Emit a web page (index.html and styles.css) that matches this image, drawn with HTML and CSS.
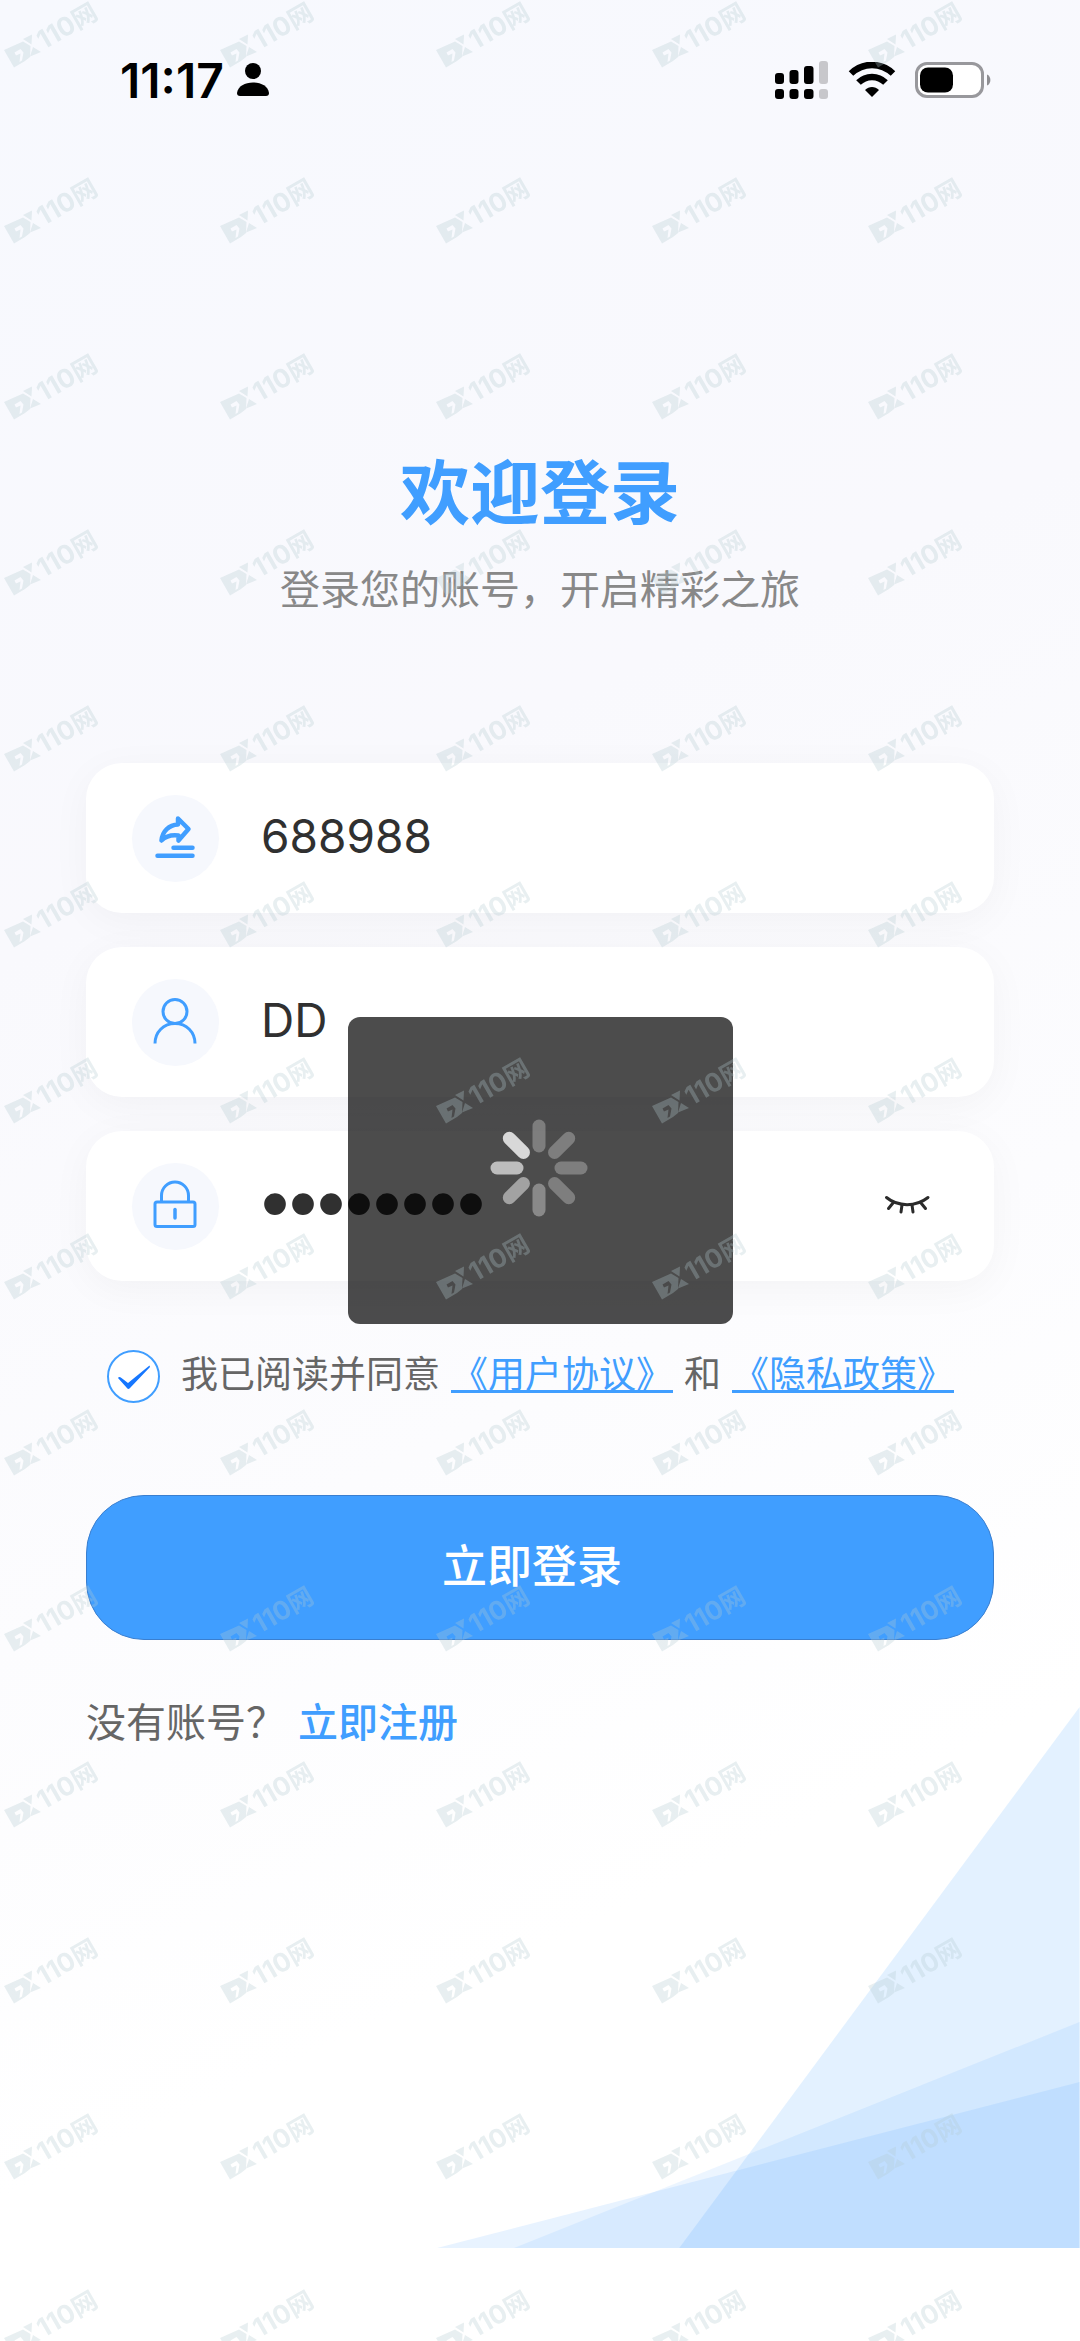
FILE: index.html
```html
<!DOCTYPE html>
<html lang="zh-CN">
<head>
    <meta charset="UTF-8">
    <meta name="viewport" content="width=device-width, initial-scale=1.0">
    <title>欢迎登录</title>
    <link rel="stylesheet" href="styles.css">
</head>
<body>
    <div class="page">
        <svg class="page-bg" viewBox="0 0 642 541" preserveAspectRatio="none" aria-hidden="true">
            <polygon points="242,541 642,0 642,541" fill="#409eff" fill-opacity="0.15"/>
            <polygon points="77,541 642,315 642,541" fill="#409eff" fill-opacity="0.1"/>
            <polygon points="0,541 642,375 642,541" fill="#409eff" fill-opacity="0.12"/>
        </svg>

        <header class="status-bar">
            <div class="status-left">
                <span class="time">11:17</span>
                <svg width="32" height="34" viewBox="0 0 32 34" aria-hidden="true">
                    <circle cx="16" cy="8" r="8"/>
                    <path d="M3 33 Q0 33 0 30 C1 23 8 19.500 16 19.500 C24 19.500 31 23 32 30 Q32 33 29 33Z"/>
                </svg>
            </div>
            <div class="status-right">
                <svg width="54" height="38" viewBox="0 0 54 38" aria-hidden="true">
                    <rect x="0" y="12" width="9" height="11" rx="3"/>
                    <rect x="14.500" y="9" width="9" height="14" rx="3"/>
                    <rect x="29" y="5" width="9.500" height="18" rx="3"/>
                    <rect x="44" y="0" width="9" height="23" rx="3" fill="#c7c7cb"/>
                    <rect x="0" y="28" width="9" height="10" rx="3"/>
                    <rect x="14.500" y="28" width="9" height="10" rx="3"/>
                    <rect x="29" y="28" width="9.500" height="10" rx="3"/>
                    <rect x="44" y="28" width="9" height="10" rx="3" fill="#c7c7cb"/>
                </svg>
                <svg width="48" height="36" viewBox="0 0 48 36" aria-hidden="true">
                    <path d="M3 11.500 C15 0 33 0 45 11.500" fill="none" stroke="#000" stroke-width="6.500"/>
                    <path d="M10.500 20.500 C18 13 30 13 37.500 20.500" fill="none" stroke="#000" stroke-width="6.500"/>
                    <path d="M17 28 C21 24 27 24 31 28 L24 35Z"/>
                </svg>
                <svg width="76" height="36" viewBox="0 0 76 36" aria-hidden="true">
                    <rect x="1.500" y="1.500" width="66" height="33" rx="10.500" fill="#fff" stroke="#98989c" stroke-width="3"/>
                    <rect x="5" y="5.500" width="33" height="25" rx="8"/>
                    <path d="M72 12.500 C76.500 14 76.500 22 72 23.500Z" fill="#8e8e92"/>
                </svg>
            </div>
        </header>

        <main class="login">
            <h1 class="title">欢迎登录</h1>
            <p class="subtitle">登录您的账号，开启精彩之旅</p>

            <form class="login-form" onsubmit="return false">
                <div class="field">
                    <label class="field-icon" for="invite" aria-label="邀请码">
                        <svg width="48" height="48" viewBox="0 0 48 48" fill="none" stroke="#409eff" stroke-width="4.500" stroke-linecap="round" stroke-linejoin="round">
                            <path d="M26 4.500 L36.500 15 L26.500 26.500 V21.500 C19 20.500 14 22 9.500 26.500 C10.500 17 17 11 26 10.500Z"/>
                            <path d="M21.500 33.700 H40.500 M5.500 41.700 H40.500"/>
                        </svg>
                    </label>
                    <input type="text" id="invite" value="688988">
                </div>

                <div class="field">
                    <label class="field-icon" for="username" aria-label="账号">
                        <svg width="48" height="48" viewBox="0 0 48 48" fill="none" stroke="#409eff" stroke-width="3">
                            <circle cx="23" cy="13.500" r="12"/>
                            <path d="M3 45.500 C3 34 11.500 25.500 23 25.500 C34.500 25.500 43 34 43 45.500"/>
                        </svg>
                    </label>
                    <input type="text" id="username" value="DD">
                </div>

                <div class="field">
                    <label class="field-icon" for="password" aria-label="密码">
                        <svg width="48" height="48" viewBox="0 0 48 48" fill="none" stroke="#409eff" stroke-width="3">
                            <rect x="3" y="20" width="40" height="24.500" rx="2"/>
                            <path d="M9.500 20 V13.500 A13.500 13.500 0 0 1 36.500 13.500 V20"/>
                            <path d="M23 27.500 V36" stroke-width="3.500" stroke-linecap="round"/>
                        </svg>
                    </label>
                    <input class="password" type="password" id="password" value="12345678">
                    <button class="eye" type="button" aria-label="显示密码">
                        <svg width="48" height="48" viewBox="0 0 48 48" fill="none" stroke="#2b2b2b" stroke-width="3" stroke-linecap="round">
                            <path d="M3.500 15.500 C15 25 33 25 45 15.500"/>
                            <path d="M10 21 L5.500 26.500 M19 23 L18 30 M29 23 L30 30 M38 21 L42.500 26.500"/>
                        </svg>
                    </button>
                </div>

                <div class="agreement">
                    <span class="check">
                        <input type="checkbox" id="agree" checked>
                        <svg viewBox="0 0 53 53" aria-hidden="true">
                            <path d="M11 28 Q12 26 14.500 28 L21 33 L42.500 15.500 L43 17 L23 38 Q21 40 19.500 37.500Z" fill="#1677ff"/>
                        </svg>
                    </span>
                    <label for="agree">我已阅读并同意</label>
                    <a href="#">《用户协议》</a>
                    <span>和</span>
                    <a href="#">《隐私政策》</a>
                </div>

                <button class="submit" type="submit">立即登录</button>
            </form>

            <p class="register">没有账号？<a href="#">立即注册</a></p>
        </main>
    </div>

    <!-- loading -->
    <div class="loading-mask">
        <div class="loading" role="status" aria-label="加载中">
            <svg width="98" height="98" viewBox="-49 -49 98 98" stroke="#fff" stroke-width="13" stroke-linecap="round">
                <path d="M0 -42 V-22" stroke-opacity="0.28"/>
                <path d="M0 -42 V-22" stroke-opacity="0.28" transform="rotate(45)"/>
                <path d="M0 -42 V-22" stroke-opacity="0.28" transform="rotate(90)"/>
                <path d="M0 -42 V-22" stroke-opacity="0.28" transform="rotate(135)"/>
                <path d="M0 -42 V-22" stroke-opacity="0.34" transform="rotate(180)"/>
                <path d="M0 -42 V-22" stroke-opacity="0.48" transform="rotate(225)"/>
                <path d="M0 -42 V-22" stroke-opacity="0.63" transform="rotate(270)"/>
                <path d="M0 -42 V-22" stroke-opacity="0.78" transform="rotate(315)"/>
            </svg>
        </div>
    </div>

    <!-- watermark -->
    <svg class="watermark" aria-hidden="true">
        <defs>
            <pattern id="mark" width="216" height="176" patternUnits="userSpaceOnUse">
                <g fill="#b4cbd0">
                    <path fill-rule="evenodd" d="M4 50 L23 41.500 L30.500 46 L30 57 L25 61 L14 67.500Z M14.500 52.500 L20.500 49 L23.500 52.500 L22 60.500 L19.500 62 L20.500 53.500 L16 55.500Z"/>
                    <path d="M23 39 L32 34.500 L31.500 44.500Z M33 47 L41 52 L30 56.500Z"/>
                    <text class="mark-text" transform="translate(14 67) rotate(-30)"><tspan x="34">110</tspan><tspan class="mark-cjk" x="74">网</tspan></text>
                </g>
            </pattern>
        </defs>
        <rect width="100%" height="100%" fill="url(#mark)"/>
    </svg>
</body>
</html>
```
FILE: styles.css
```css
* {
    box-sizing: border-box;
}
body {
    margin: 0;
    min-height: 100vh;
    padding-bottom: 93px;
    background: #fff;
    display: flex;
    flex-direction: column;
    font-family: Inter, "Noto Sans CJK SC", sans-serif;
    color: #666;
}
.page {
    position: relative;
    flex: 1;
    background: linear-gradient(155deg, #f7f9fe 0%, #f9f9fd 35%, #fcfcfe 60%, #fff 80%);
}
.page-bg {
    position: absolute;
    right: 0;
    bottom: 0;
    width: 59.5%;
    height: 541px;
}

/* status bar */
.status-bar {
    display: flex;
    justify-content: space-between;
    align-items: center;
    height: 160px;
    padding: 0 89px 0 120px;
}
.status-left,
.status-right {
    display: flex;
    align-items: center;
}
.status-left {
    gap: 13px;
}
.status-right {
    gap: 19px;
}
.time {
    font-size: 48px;
    font-weight: 600;
    color: #000;
}

/* login */
.login {
    position: relative;
    padding: 294px 86px 80px;
}
.title {
    margin: 0;
    font-size: 70px;
    line-height: 80px;
    font-weight: 700;
    text-align: center;
    color: #409eff;
}
.subtitle {
    margin: 32px 0 0;
    font-size: 40px;
    line-height: 48px;
    text-align: center;
    color: #888;
}
.login-form {
    display: flex;
    flex-direction: column;
    gap: 34px;
    margin-top: 149px;
}
.field {
    display: flex;
    align-items: center;
    height: 150px;
    padding: 0 63px 0 46px;
    background: #fff;
    border-radius: 36px;
    box-shadow: 0 8px 40px rgba(0, 0, 0, 0.04);
}
.field-icon {
    display: flex;
    align-items: center;
    justify-content: center;
    flex: none;
    width: 87px;
    height: 87px;
    border-radius: 50%;
    background: #f6f8fd;
}
.field-icon svg {
    overflow: visible;
}
.field input {
    flex: 1;
    min-width: 0;
    margin-left: 42px;
    padding: 0 0 4px;
    border: none;
    outline: none;
    background: transparent;
    font-family: Inter, sans-serif;
    font-size: 46px;
    color: #303030;
}
.field .password {
    font-family: "Liberation Sans", sans-serif;
    font-size: 80px;
}
.eye {
    display: flex;
    padding: 0;
    border: none;
    background: none;
}

.agreement {
    display: flex;
    align-items: center;
    gap: 11px;
    margin-top: 35px;
    padding-left: 21px;
    font-size: 37px;
    line-height: 50px;
}
.agreement > label,
.agreement > a,
.agreement > span {
    padding-bottom: 3px;
}
.agreement .check {
    position: relative;
    width: 53px;
    height: 53px;
    margin-right: 10px;
    padding: 0;
}
.check input {
    appearance: none;
    display: block;
    width: 53px;
    height: 53px;
    margin: 0;
    border: 2px solid #409eff;
    border-radius: 50%;
    background: #fff;
}
.check svg {
    position: absolute;
    top: 0;
    left: 0;
    pointer-events: none;
}
a {
    color: #409eff;
}
.agreement a {
    text-decoration-thickness: 3px;
    text-decoration-skip-ink: none;
    text-underline-offset: 2px;
}

.submit {
    height: 145px;
    margin-top: 58px;
    padding: 0 16px 8px 0;
    border: 1px solid #3a7fd0;
    border-radius: 58px;
    background: #409eff;
    font-family: inherit;
    font-size: 45px;
    font-weight: 500;
    color: #fff;
}
.register {
    margin: 59px 0 0;
    font-size: 40px;
    line-height: 48px;
}
.register a {
    margin-left: 12px;
    font-weight: 500;
    text-decoration: none;
}

/* loading */
.loading-mask {
    position: fixed;
    inset: 0;
    display: flex;
    align-items: center;
    justify-content: center;
}
.loading {
    display: flex;
    align-items: center;
    justify-content: center;
    width: 385px;
    height: 307px;
    padding: 0 3px 6px 0;
    border-radius: 12px;
    background: rgba(0, 0, 0, 0.7);
}

/* watermark */
.watermark {
    position: fixed;
    top: 0;
    left: 0;
    width: 100%;
    height: 100%;
    opacity: 0.3;
    pointer-events: none;
}
.mark-text {
    font-family: Inter, sans-serif;
    font-size: 26px;
    font-weight: 700;
}
.mark-cjk {
    font-family: "Noto Sans CJK SC", sans-serif;
    font-size: 25px;
}
```
